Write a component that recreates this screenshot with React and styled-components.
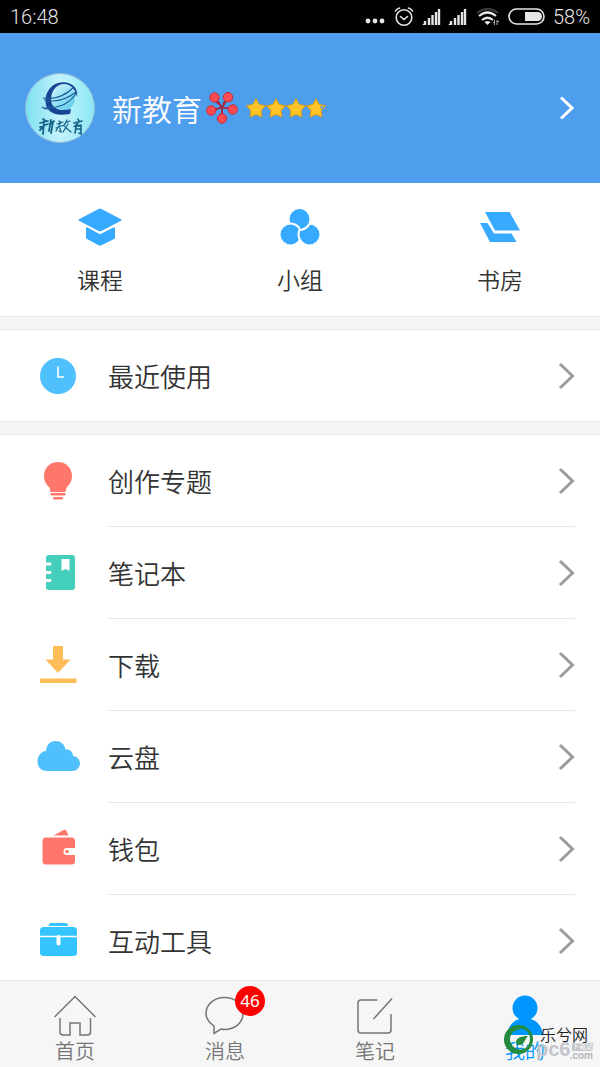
import React from "react";
import styled, { createGlobalStyle } from "styled-components";

const quickLinks = [
  { label: "课程", icon: <CourseIcon /> },
  { label: "小组", icon: <GroupIcon /> },
  { label: "书房", icon: <StudyIcon /> },
];

const tools = [
  { label: "创作专题", icon: <BulbIcon /> },
  { label: "笔记本", icon: <NotebookIcon /> },
  { label: "下载", icon: <DownloadIcon /> },
  { label: "云盘", icon: <CloudIcon /> },
  { label: "钱包", icon: <WalletIcon /> },
  { label: "互动工具", icon: <ToolboxIcon /> },
];

const tabs = [
  { label: "首页", icon: <HomeIcon /> },
  { label: "消息", icon: <MessageIcon />, count: 46 },
  { label: "笔记", icon: <NoteIcon /> },
  { label: "我的", icon: <PersonIcon />, active: true },
];

const App = () => {
  return (
    <Screen>
      <GlobalStyle />
      <StatusBar>
        <span>16:48</span>
        <StatusIcons>
          <StatusGlyphs />
          <span>58%</span>
        </StatusIcons>
      </StatusBar>

      <Profile href="#profile">
        <Avatar />
        <UserName>新教育</UserName>
        <Flower />
        <Stars />
        <Chevron width="16" height="24" viewBox="0 0 16 24" $color="#ffffff">
          <path d="M2 1.5 13 12 2 22.5" />
        </Chevron>
      </Profile>

      <Content>
        <QuickLinks>
          {quickLinks.map((item) => (
            <QuickLink key={item.label} type="button">
              {item.icon}
              <span>{item.label}</span>
            </QuickLink>
          ))}
        </QuickLinks>

        <Group>
          <MenuItem label="最近使用" icon={<ClockIcon />} />
        </Group>

        <Group>
          {tools.map((item) => (
            <MenuItem key={item.label} {...item} />
          ))}
        </Group>
      </Content>

      <TabBar>
        {tabs.map((tab) => (
          <Tab key={tab.label} type="button" $active={tab.active}>
            <TabIcon>
              {tab.icon}
              {tab.count && <Badge>{tab.count}</Badge>}
            </TabIcon>
            <span>{tab.label}</span>
          </Tab>
        ))}
      </TabBar>

      <Watermark>
        <LeafLogo />
        <SiteName>乐兮网</SiteName>
        <SiteUrl>pc6</SiteUrl>
        <SiteTag>下载站</SiteTag>
        <SiteDomain>.com</SiteDomain>
      </Watermark>
    </Screen>
  );
};

const MenuItem = ({ label, icon }) => (
  <Row type="button">
    <RowIcon>{icon}</RowIcon>
    <RowBody>
      <span>{label}</span>
      <Chevron width="18" height="28" viewBox="0 0 18 28" $color="#9b9b9b">
        <path d="M3 2 15.5 14 3 26" />
      </Chevron>
    </RowBody>
  </Row>
);

// Status bar

function StatusGlyphs() {
  return (
    <svg width="182" height="24" viewBox="0 0 182 24" fill="none">
      <g fill="#e6e6e6">
        <circle cx="3" cy="16" r="2.4" />
        <circle cx="10" cy="16" r="2.4" />
        <circle cx="17" cy="16" r="2.4" />
      </g>
      <g stroke="#e6e6e6" strokeWidth="1.6" strokeLinecap="round">
        <circle cx="39" cy="12.5" r="7.8" />
        <path d="m35.5 11.5 3.5 3 3.5-3M30.5 6q1-2 4-3M47.5 6q-1-2-4-3" />
      </g>
      <g stroke="#e6e6e6" strokeWidth="2.4">
        <path d="M60 20v-4M64 20v-7M67.5 20V10M71 20V7M74 20V4" />
        <path d="M86 20v-4M90 20v-7M93.5 20V10M97 20V7M100 20V4" />
      </g>
      <path d="M57 20l4-3v3zM83 20l4-3v3z" fill="#e6e6e6" />
      <path d="M112 8q10.5-8 21 0" stroke="#383838" strokeWidth="2.2" />
      <path
        d="M114 11q8.500-7 17 0M117 15q5.500-4.500 11 0"
        stroke="#e6e6e6"
        strokeWidth="2.2"
      />
      <path d="M119.5 17q3-2 6 0l-3 3z" fill="#e6e6e6" />
      <path d="M129.5 15v5M132 15v5M128 17.5h2M132 16.5h2" stroke="#aaaaaa" />
      <rect x="144" y="4" width="35" height="15" rx="7.5" stroke="#e6e6e6" strokeWidth="1.6" />
      <path d="M160 7h12.5a4.500 4.500 0 0 1 0 9H160z" fill="#e6e6e6" />
    </svg>
  );
}

// Profile

function Avatar() {
  return (
    <svg width="70" height="70" viewBox="0 0 70 70">
      <defs>
        <linearGradient id="avatarSky">
          <stop offset="0" stopColor="#7be0f2" />
          <stop offset=".5" stopColor="#c4f2fa" />
          <stop offset="1" stopColor="#8be7f6" />
        </linearGradient>
        <linearGradient id="globe" x2="1" y2="1">
          <stop offset="0" stopColor="#d8f8fc" />
          <stop offset="1" stopColor="#54c9ec" />
        </linearGradient>
      </defs>
      <circle cx="35" cy="35" r="34.5" fill="url(#avatarSky)" stroke="#9bbfd2" />
      <circle cx="37" cy="25" r="13" fill="url(#globe)" />
      <path
        d="M52 24C55 6 26 3 21 23c-3 16 9 21 24 18l1-5c-11 3-20 0-20-10 1-18 22-21 26-2z"
        fill="#174494"
      />
      <path
        d="M18 25q17 3 31-11M19 27q17 4 32-8M19 35q23 1 33-16M17 34q4 3 8 1"
        fill="none"
        stroke="#1b5d9b"
        strokeWidth="1.2"
      />
      {/* calligraphy strokes under the globe */}
      <g fill="none" stroke="#14648a" strokeLinecap="round">
        <path
          d="m18 46 3 2M15 50l8-2M15 54l8-3M19 48l-1 13M18 54l-3 3M26 47l-2 11M25 51l4-3M28 49l-2 11"
          strokeWidth="1.8"
        />
        <path
          d="m34 48 2 2M32 51l6-2M31 55l8-3M36 49l-5 9M35 55l1 4-2-1M42 47l-3 6M40 50l5-2M43 51l-5 8M40 54l6 5"
          strokeWidth="1.2"
        />
        <path
          d="m53 46 1 2M49 50l8-2M53 50l-3 3 6-1M51 54l-1 6M51 53h5v8l-2-1M52 56h3"
          strokeWidth="1.6"
        />
      </g>
    </svg>
  );
}

function Flower() {
  return (
    <svg width="32" height="32" viewBox="0 0 32 32">
      <path
        d="M16 15.500 9 6M16 15.500 22 5.500M16 15.500 5.500 18M16 15.500 26.500 17M16 15.500V26"
        stroke="#a82238"
        strokeWidth="1.6"
      />
      <path
        d="m6 7 7 2.500 3 6-5-4zM25 7l-5 3-4 5.500 1.500-6zM5 21l5-4.500 6-1-6 3zM27 21l-5-4-6-1.500 6 .5zM13 25l2-4 1-5.500 1 5.500 2 4z"
        fill="#a82238"
      />
      <g fill="#fb4b50" stroke="#c92b3b">
        <circle cx="8.5" cy="5.5" r="4.700" />
        <circle cx="22" cy="5.2" r="4.700" />
        <circle cx="5.2" cy="18.5" r="4.700" />
        <circle cx="26.7" cy="17.5" r="4.700" />
        <circle cx="16" cy="26.5" r="4.700" />
      </g>
    </svg>
  );
}

function Stars() {
  const star = "m10 .8 3.100 5.700 6.400 1.200-4.300 4.800.7 6.500L10 16.400 4.100 19l.7-6.500L.5 7.700l6.400-1.200z";
  return (
    <svg width="80" height="20" viewBox="0 0 80 20">
      <g fill="#ffc425" stroke="#dc9a1c" strokeLinejoin="round">
        <path d={star} />
        <path d={star} transform="translate(20)" />
        <path d={star} transform="translate(40)" />
        <path d={star} transform="translate(60)" />
      </g>
      <path d="m74.5 8 3.500.5-3 3z" fill="#4e9eee" />
    </svg>
  );
}

// Shortcuts

function CourseIcon() {
  return (
    <svg width="44" height="40" viewBox="0 0 44 40" fill="#35aaff">
      <path d="M20.5 2q1.500-.8 3 0L43 12.200q1.200.8 0 1.600L23.500 24q-1.500.8-3 0L1 13.800q-1.200-.8 0-1.600z" />
      <path d="M8 21.500q0-1.800 2-.8l12 6.500 13-6.500q2-1 2 .8v9q0 1-1 1.500l-12.500 6.200q-1.500.8-3 0L9 32Q8 31.500 8 30.500z" />
    </svg>
  );
}

function GroupIcon() {
  return (
    <svg width="44" height="40" viewBox="0 0 44 40" fill="#35aaff">
      <defs>
        <clipPath id="topCircleRight">
          <path d="M22 0h22v40H22z" />
        </clipPath>
      </defs>
      {/* three circles, each overlapping the next one round */}
      <circle cx="21.5" cy="12" r="10" />
      <g stroke="#ffffff" strokeWidth="2">
        <circle cx="12.5" cy="27.5" r="11" />
        <circle cx="31.5" cy="27.5" r="11" />
        <circle cx="21.5" cy="12" r="11" clipPath="url(#topCircleRight)" />
      </g>
    </svg>
  );
}

function StudyIcon() {
  return (
    <svg width="44" height="40" viewBox="0 0 44 40" fill="#35aaff">
      <path d="M7 5h24.500L42 23.500H17z" />
      <path d="M2 16h7.500L16 26.500h17.500L38.500 35H12z" />
    </svg>
  );
}

// Menu icons

function ClockIcon() {
  return (
    <svg width="44" height="44" viewBox="0 0 44 44">
      <circle cx="22" cy="22" r="18" fill="#4fc0fb" />
      <path d="M22 12.5V23h6" fill="none" stroke="#ffffff" strokeWidth="1.6" />
    </svg>
  );
}

function BulbIcon() {
  return (
    <svg width="44" height="44" viewBox="0 0 44 44" fill="#ff776b">
      <path d="M22 3C14 3 8 9 8 17c0 6 3 9 5 11 1 1 1 2 1 3.500 0 .8.7 1.500 1.500 1.500h13c.8 0 1.500-.7 1.500-1.500 0-1.500 0-2.500 1-3.500 2-2 5-5 5-11 0-8-6-14-14-14z" />
      <rect x="14.5" y="34" width="15" height="2.6" rx="1.3" />
      <rect x="17" y="38" width="10" height="2.6" rx="1.3" />
    </svg>
  );
}

function NotebookIcon() {
  return (
    <svg width="44" height="44" viewBox="0 0 44 44">
      <rect x="10" y="4" width="29" height="35" rx="3" fill="#44cfbc" />
      <path d="M9 13h5M9 21.500h5M9 29.500h5" stroke="#ffffff" strokeWidth="3" strokeLinecap="round" />
      <path d="M25.500 8h8v12l-4-2-4 2z" fill="#ffffff" />
    </svg>
  );
}

function DownloadIcon() {
  return (
    <svg width="44" height="44" viewBox="0 0 44 44" fill="#ffbd59">
      <path d="M17 3h10v13.500h7.500L22 30 9.500 16.500H17zM4 35.500h36.500V40H4z" />
    </svg>
  );
}

function CloudIcon() {
  return (
    <svg width="44" height="44" viewBox="0 0 44 44" fill="#4fc0fb">
      <path d="M11 36C5 36 1.500 32 1.500 26.500S5 16.500 10 16C10.500 10 14 6 19.500 6c5 0 9 3 9.800 8.200 5-.2 7.700 2.800 7.700 6.800 4 .5 7 3.500 7 7.500s-3.500 7.500-8 7.500z" />
    </svg>
  );
}

function WalletIcon() {
  return (
    <svg width="44" height="44" viewBox="0 0 44 44">
      <path d="m17.500 8.500 10-5.500q2-.8 3 1l2 4.500z" fill="#ff776b" />
      <rect x="6.5" y="10.5" width="32.5" height="27" rx="3.5" fill="#ff776b" />
      <path d="M40 21h-9a3.500 3.500 0 0 0 0 7h9z" fill="#ffffff" />
      <circle cx="31" cy="24.5" r="1.8" fill="#ff776b" />
    </svg>
  );
}

function ToolboxIcon() {
  return (
    <svg width="44" height="44" viewBox="0 0 44 44">
      <path d="M12.500 7q0-3 3-3h14q2.500 0 2.500 3z" fill="#34c5ff" />
      <rect x="4" y="8" width="37" height="29" rx="3.5" fill="#34c5ff" />
      <path d="M4 17.500h37" stroke="#ffffff" strokeWidth="1.5" />
      <path d="M22.500 18v6.500" stroke="#ffffff" strokeWidth="4" strokeLinecap="round" />
    </svg>
  );
}

// Tab icons

function HomeIcon() {
  return (
    <svg width="44" height="44" viewBox="0 0 44 44" fill="none" stroke="#757575" strokeWidth="1.5">
      <path d="M1.500 23 22 2.500 42.500 23M7 24v14q0 3 3 3h7V29h10v12h7.500q3 0 3-3V24" />
    </svg>
  );
}

function MessageIcon() {
  return (
    <svg width="44" height="44" viewBox="0 0 44 44" fill="none" stroke="#757575" strokeWidth="1.5">
      <path d="M11 39.500v-7.500C6 28.500 3 24.500 3 19.500 3 10.500 11 3.500 21.500 3.500S40 10.500 40 19.500s-8 16-18.500 16q-2 0-3.500-.5z" />
    </svg>
  );
}

function NoteIcon() {
  return (
    <svg width="44" height="44" viewBox="0 0 44 44" fill="none" stroke="#757575" strokeWidth="1.5">
      <path d="M24.500 6H8Q5 6 5 9v27q0 3 3 3h27q3 0 3-3V20M20.500 25 39 4.500" />
    </svg>
  );
}

function PersonIcon() {
  return (
    <svg width="44" height="44" viewBox="0 0 44 44" fill="#0096ff">
      <circle cx="22" cy="14" r="12.5" />
      <path d="M4 41c1-9 6-14 12-16h12c6 2 11 7 12 16z" />
    </svg>
  );
}

function LeafLogo() {
  return (
    <svg width="30" height="32" viewBox="0 0 30 32">
      <path
        d="M14.500 1a14.500 14.500 0 1 0 0 29 14.500 14.500 0 1 0 0-29zm3 3.500c5 1 8.500 5 8.500 10.500s-4 10.500-9.500 10.500S6 21 6 15 11 6 17.500 4.500z"
        fill="#238b3d"
        fillRule="evenodd"
      />
      <path d="M12 20c-1-6 5-8 12-8-3 2-3 8-8 9-2 .3-3 0-3.500-1l4-3.500z" fill="#238b3d" />
    </svg>
  );
}

const GlobalStyle = createGlobalStyle`
  * {
    box-sizing: border-box;
  }

  body {
    margin: 0;
    background: #f4f5f7;
    font-family: "Noto Sans", "Noto Sans CJK SC", sans-serif;
    font-weight: 350;
  }

  button {
    padding: 0;
    border: 0;
    background: none;
    color: inherit;
    font: inherit;
    cursor: pointer;
  }

  svg {
    display: block;
    flex-shrink: 0;
  }
`;

const Screen = styled.div`
  position: relative;
  display: flex;
  flex-direction: column;
  height: 100vh;
  overflow: hidden;
  color: #333333;
`;

const StatusBar = styled.header`
  display: flex;
  flex-shrink: 0;
  align-items: center;
  justify-content: space-between;
  height: 33px;
  padding: 0 10px;
  background: #000000;
  color: #e6e6e6;
  font-family: Roboto, sans-serif;
  font-size: 20px;
`;

const StatusIcons = styled.div`
  display: flex;
  align-items: center;
  gap: 6px;
`;

const Profile = styled.a`
  display: flex;
  flex-shrink: 0;
  align-items: center;
  height: 150px;
  padding: 0 25px;
  background: #4e9eee;
  color: #ffffff;
  text-decoration: none;
`;

const UserName = styled.span`
  margin: 0 4px 0 17px;
  font-family: "Noto Sans CJK SC", sans-serif;
  font-size: 30px;
  line-height: 40px;

  & + svg {
    margin-right: 8px;
  }
`;

const Chevron = styled.svg`
  margin-left: auto;
  fill: none;
  stroke: ${(props) => props.$color};
  stroke-width: 3;
`;

const Content = styled.main`
  display: flex;
  flex: 1;
  flex-direction: column;
  gap: 12px;
  min-height: 0;
  overflow-y: auto;
  scrollbar-width: none;
`;

const QuickLinks = styled.nav`
  display: grid;
  flex-shrink: 0;
  grid-template-columns: repeat(3, 1fr);
  height: 134px;
  border-bottom: 1px solid #e8e8ea;
  background: #ffffff;
`;

const QuickLink = styled.button`
  display: flex;
  flex-direction: column;
  align-items: center;
  gap: 17px;
  padding-top: 24px;
  font-size: 23px;
  line-height: 32px;
`;

const Group = styled.section`
  flex-shrink: 0;
  border-top: 1px solid #e8e8ea;
  border-bottom: 1px solid #e8e8ea;
  background: #ffffff;
`;

const RowBody = styled.span`
  display: flex;
  flex: 1;
  align-items: center;
  height: 92px;
  border-bottom: 1px solid #e8e8ea;
  font-size: 26px;
`;

const Row = styled.button`
  display: flex;
  align-items: center;
  width: 100%;
  padding: 0 25px 0 36px;
  text-align: left;

  &:last-child ${RowBody} {
    height: 91px;
    border-bottom: 0;
  }
`;

const RowIcon = styled.span`
  width: 72px;
`;

const TabBar = styled.nav`
  display: grid;
  flex-shrink: 0;
  grid-template-columns: repeat(4, 1fr);
  height: 87px;
  border-top: 1px solid #e4e4e4;
  background: #f6f6f6;
`;

const Tab = styled.button`
  display: flex;
  flex-direction: column;
  align-items: center;
  padding-top: 13px;
  color: ${(props) => (props.$active ? "#0096ff" : "#757575")};
  font-size: 20px;
  line-height: 28px;
`;

const TabIcon = styled.span`
  position: relative;
`;

const Badge = styled.span`
  position: absolute;
  top: -8px;
  right: -18px;
  width: 30px;
  height: 30px;
  border-radius: 50%;
  background: #ff0000;
  color: #ffffff;
  font-size: 17px;
  font-weight: 400;
  line-height: 30px;
`;

const Watermark = styled.div`
  position: absolute;
  right: 0;
  bottom: 0;
  width: 96px;
  height: 44px;
  pointer-events: none;

  svg {
    position: absolute;
    top: 1px;
    left: 0;
  }
`;

const SiteName = styled.span`
  position: absolute;
  top: 0;
  left: 36px;
  color: #222222;
  font-size: 16px;
  line-height: 24px;
`;

const SiteUrl = styled.span`
  position: absolute;
  top: 14px;
  left: 32px;
  color: #c3c5cc;
  font-family: "Liberation Sans", sans-serif;
  font-size: 20px;
  font-weight: bold;
  line-height: 24px;
`;

const SiteTag = styled.span`
  position: absolute;
  top: 20px;
  right: 7px;
  background: #c3c5cc;
  color: #ffffff;
  font-size: 7px;
  line-height: 8px;
`;

const SiteDomain = styled.span`
  position: absolute;
  top: 27px;
  right: 7px;
  color: #b4b4b8;
  font-family: "Liberation Sans", sans-serif;
  font-size: 10px;
  font-weight: bold;
  line-height: 12px;
`;

export default App;
